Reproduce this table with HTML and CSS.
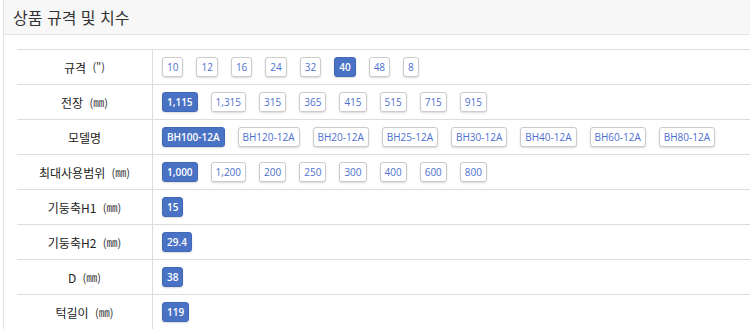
FILE: index.html
```html
<!DOCTYPE html>
<html lang="ko">
<head>
<meta charset="utf-8">
<link rel="stylesheet" href="styles.css">
</head>
<body>
<div class="card">
  <div class="card-head">상품 규격 및 치수</div>
  <div class="card-body">
    <div class="spec">
      <div class="row">
        <div class="label">규격 <span class="unit">(")</span></div>
        <div class="opts">
          <span class="btn">10</span><span class="btn">12</span><span class="btn">16</span><span class="btn">24</span><span class="btn">32</span><span class="btn on">40</span><span class="btn">48</span><span class="btn">8</span>
        </div>
      </div>
      <div class="row">
        <div class="label">전장 <span class="unit">(㎜)</span></div>
        <div class="opts">
          <span class="btn on">1,115</span><span class="btn">1,315</span><span class="btn">315</span><span class="btn">365</span><span class="btn">415</span><span class="btn">515</span><span class="btn">715</span><span class="btn">915</span>
        </div>
      </div>
      <div class="row">
        <div class="label">모델명</div>
        <div class="opts">
          <span class="btn on">BH100-12A</span><span class="btn">BH120-12A</span><span class="btn">BH20-12A</span><span class="btn">BH25-12A</span><span class="btn">BH30-12A</span><span class="btn">BH40-12A</span><span class="btn">BH60-12A</span><span class="btn">BH80-12A</span>
        </div>
      </div>
      <div class="row">
        <div class="label">최대사용범위 <span class="unit">(㎜)</span></div>
        <div class="opts">
          <span class="btn on">1,000</span><span class="btn">1,200</span><span class="btn">200</span><span class="btn">250</span><span class="btn">300</span><span class="btn">400</span><span class="btn">600</span><span class="btn">800</span>
        </div>
      </div>
      <div class="row">
        <div class="label">기둥축H1 <span class="unit">(㎜)</span></div>
        <div class="opts"><span class="btn on">15</span></div>
      </div>
      <div class="row">
        <div class="label">기둥축H2 <span class="unit">(㎜)</span></div>
        <div class="opts"><span class="btn on">29.4</span></div>
      </div>
      <div class="row">
        <div class="label">D <span class="unit">(㎜)</span></div>
        <div class="opts"><span class="btn on">38</span></div>
      </div>
      <div class="row">
        <div class="label">턱길이 <span class="unit">(㎜)</span></div>
        <div class="opts"><span class="btn on">119</span></div>
      </div>
    </div>
  </div>
</div>
</body>
</html>
```

FILE: styles.css
```css
html, body {
  margin: 0;
  padding: 0;
  background: #fff;
  font-family: "Noto Sans CJK KR", "Noto Sans", sans-serif;
  color: #222;
}
.card {
  margin-left: 3px;
  border-left: 1px solid #e2e2e2;
  height: 329px;
  overflow: hidden;
}
.card-head {
  height: 35px;
  box-sizing: border-box;
  background: #f7f7f7;
  border-bottom: 1px solid #e4e4e4;
  padding-left: 9px;
  font-size: 16px;
  line-height: 34px;
  color: #333;
}
.card-body {
  padding: 14px 0 0 13px;
}
.spec {
  border-top: 1px solid #ddd;
}
.row {
  display: flex;
  height: 35px;
  border-bottom: 1px solid #ddd;
  box-sizing: border-box;
}
.label {
  width: 135px;
  flex: none;
  border-right: 1px solid #ddd;
  display: flex;
  align-items: center;
  justify-content: center;
  font-size: 12px;
  color: #222;
  white-space: pre;
}
.unit {
  font-size: 11px;
  margin-left: 3px;
  color: #333;
}
.opts {
  display: flex;
  align-items: center;
  padding-left: 9px;
  gap: 13px;
}
.btn {
  flex: none;
  white-space: nowrap;
  display: inline-flex;
  align-items: center;
  height: 20px;
  box-sizing: border-box;
  padding: 0 4px;
  border: 1px solid #ccc;
  border-radius: 3px;
  box-shadow: 0 1px 2px rgba(0,0,0,0.15);
  font-family: "Open Sans", "Noto Sans", sans-serif;
  font-size: 10px;
  color: #4d6fd0;
  background: #fff;
}
.btn.on {
  background: #4a72c4;
  border-color: #4169b8;
  color: #fff;
  font-weight: 600;
}
```
